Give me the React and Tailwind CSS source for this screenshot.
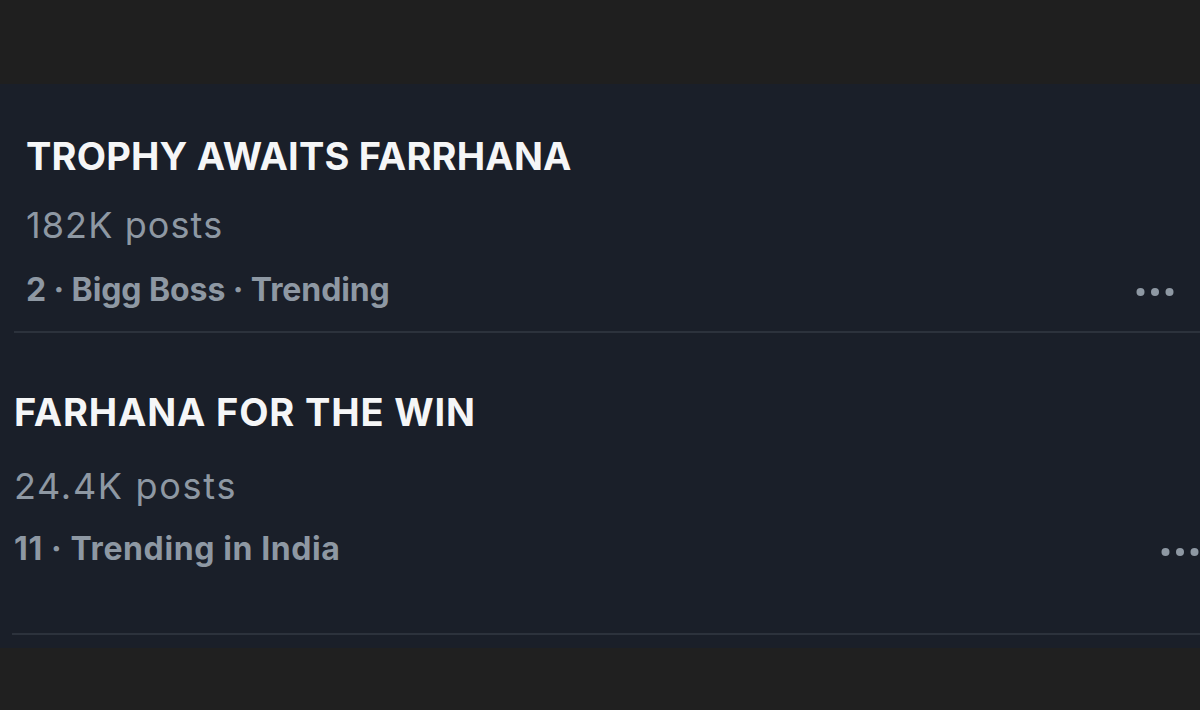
import React from "react";

function Dots() {
  return (
    <svg width="38" height="10" viewBox="0 0 38 10" className="shrink-0">
      <circle cx="4.5" cy="5" r="4" fill="#8e98a3" />
      <circle cx="19" cy="5" r="4" fill="#8e98a3" />
      <circle cx="33.5" cy="5" r="4" fill="#8e98a3" />
    </svg>
  );
}

export default function App() {
  const font = { fontFamily: "Inter, 'Noto Sans', sans-serif" };
  return (
    <div className="w-[1200px] h-[710px] flex flex-col bg-[#202020]" style={font}>
      <div className="h-[84px] bg-[#1f1f1f] shrink-0" />
      <div className="h-[564px] bg-[#1a1f29] flex flex-col shrink-0">
        <div className="pl-[26px] pt-[50px]">
          <div className="text-[38px] leading-[44px] font-bold text-[#f5f6f7] tracking-[0.2px]">TROPHY AWAITS FARRHANA</div>
          <div className="mt-[25px] text-[36px] leading-[44px] text-[#8e98a3] tracking-[1.1px]">182K posts</div>
          <div className="mt-[23px] flex items-center justify-between pr-[26px]">
            <div className="text-[32px] leading-[40px] font-bold text-[#8e98a3] tracking-[-0.1px]">2 · Bigg Boss · Trending</div>
            <div className="mt-[4px]"><Dots /></div>
          </div>
        </div>
        <div className="mt-[21px] ml-[14px] h-[2px] bg-[#2c323c]" />
        <div className="pl-[14px] pt-[57px]">
          <div className="text-[38px] leading-[44px] font-bold text-[#f5f6f7] tracking-[0.85px]">FARHANA FOR THE WIN</div>
          <div className="mt-[30px] text-[36px] leading-[44px] text-[#8e98a3] tracking-[1.7px]">24.4K posts</div>
          <div className="mt-[21px] flex items-center justify-between pr-[1px]">
            <div className="text-[32px] leading-[40px] font-bold text-[#8e98a3] tracking-[0.6px]">11 · Trending in India</div>
            <div className="mt-[6px]"><Dots /></div>
          </div>
        </div>
        <div className="mt-[64px] ml-[12px] h-[2px] bg-[#2c323c]" />
      </div>
      <div className="flex-1 bg-[#202020]" />
    </div>
  );
}
